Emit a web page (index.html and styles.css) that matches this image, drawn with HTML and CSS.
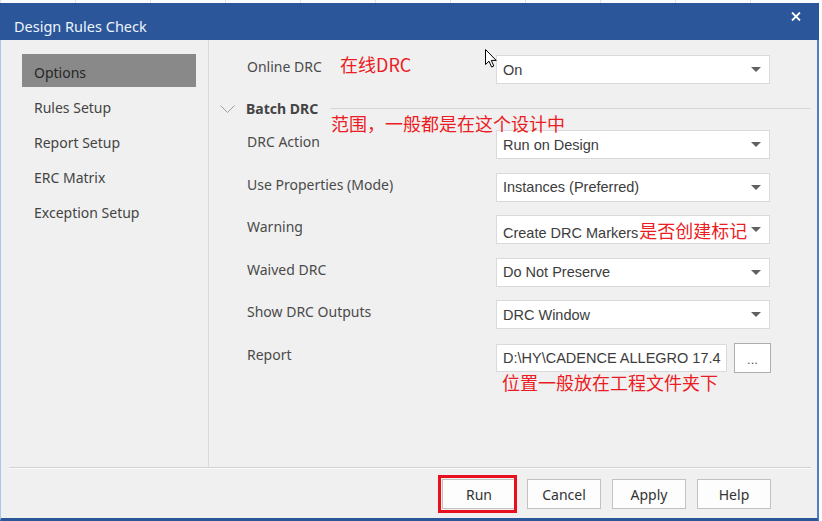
FILE: index.html
```html
<!DOCTYPE html>
<html lang="en">
<head>
<meta charset="utf-8">
<title>Design Rules Check</title>
<link rel="stylesheet" href="styles.css">
</head>
<body>
<div class="dialog">
  <div class="titlebar">
    <span class="title">Design Rules Check</span>
    <svg class="close" width="10" height="9" viewBox="0 0 10 9"><path d="M1 0.5 L9 8.5 M9 0.5 L1 8.5" stroke="#ffffff" stroke-width="1.8" fill="none"/></svg>
  </div>
  <div class="body">
    <div class="main">
      <nav class="nav">
        <div class="nav-item selected">Options</div>
        <div class="nav-item">Rules Setup</div>
        <div class="nav-item">Report Setup</div>
        <div class="nav-item">ERC Matrix</div>
        <div class="nav-item">Exception Setup</div>
      </nav>
      <section class="pane">
        <div class="form">
          <div class="label">Online DRC</div>
          <div class="select"><span class="val">On</span><span class="caret"></span></div>
        </div>
        <div class="group-head">
          <svg class="chev" width="15" height="8" viewBox="0 0 15 8"><path d="M0.5 0.5 L7.5 7.5 L14.5 0.5" stroke="#a0a0a0" stroke-width="1" fill="none"/></svg>
          <span class="group-title">Batch DRC</span>
          <span class="group-line"></span>
        </div>
        <div class="form rows">
          <div class="label">DRC Action</div>
          <div class="select"><span class="val">Run on Design</span><span class="caret"></span></div>
          <div class="label">Use Properties (Mode)</div>
          <div class="select"><span class="val">Instances (Preferred)</span><span class="caret"></span></div>
          <div class="label">Warning</div>
          <div class="select"><span class="val">Create DRC Markers<span class="note-inline">是否创建标记</span></span><span class="caret"></span></div>
          <div class="label">Waived DRC</div>
          <div class="select"><span class="val">Do Not Preserve</span><span class="caret"></span></div>
          <div class="label">Show DRC Outputs</div>
          <div class="select"><span class="val">DRC Window</span><span class="caret"></span></div>
          <div class="label">Report</div>
          <div class="report">
            <div class="textbox"><span class="path">D:\HY\CADENCE ALLEGRO 17.4</span></div>
            <div class="browse">...</div>
          </div>
        </div>
        <span class="note note-online">在线DRC</span>
        <span class="note note-scope">范围，一般都是在这个设计中</span>
        <span class="note note-report">位置一般放在工程文件夹下</span>
        <svg class="cursor" width="13" height="19" viewBox="0 0 13 19"><path d="M0.5 0.5 L0.5 15.5 L4 12.2 L6.6 18 L8.8 17 L6.3 11.4 L11.2 11.4 Z" fill="#ffffff" stroke="#000000" stroke-width="1" stroke-linejoin="round"/></svg>
      </section>
    </div>
    <div class="sep"></div>
    <div class="footer">
      <button class="btn run">Run</button>
      <button class="btn">Cancel</button>
      <button class="btn">Apply</button>
      <button class="btn">Help</button>
    </div>
  </div>
</div>
</body>
</html>
```

FILE: styles.css
```css
html, body {
  margin: 0;
  padding: 0;
}
body {
  width: 822px;
  height: 521px;
  overflow: hidden;
  background-color: #fbfcfd;
  background-image: repeating-linear-gradient(90deg, #dfe3e8 0 1px, transparent 1px 75px);
  font-family: "Noto Sans", "Open Sans", sans-serif;
}
.dialog {
  width: 819px;
  height: 518px;
  margin-top: 3px;
  display: flex;
  flex-direction: column;
}
.titlebar {
  height: 37px;
  flex: none;
  background: #2b579a;
  display: flex;
  align-items: flex-start;
  justify-content: space-between;
}
.title {
  padding: 13px 0 0 14px;
  font-size: 14.5px;
  line-height: 20px;
  color: #eef3fa;
}
.close {
  margin: 9px 18px 0 0;
}
.body {
  flex: 1;
  display: flex;
  flex-direction: column;
  background: #f0f0f0;
  border-left: 1px solid #a8c6ee;
  border-right: 2px solid #4f7fc4;
  border-bottom: 3px solid #2b579a;
}
.main {
  height: 427px;
  display: flex;
}
.nav {
  width: 208px;
  border-right: 1px solid #d9d9d9;
  padding: 14px 0 0 21px;
  box-sizing: border-box;
  display: flex;
  flex-direction: column;
  gap: 2px;
}
.nav-item {
  width: 174px;
  height: 33px;
  box-sizing: border-box;
  padding: 3px 0 0 12px;
  display: flex;
  align-items: center;
  font-size: 14px;
  color: #444;
}
.nav-item.selected {
  background: #898989;
  color: #262626;
}
.pane {
  flex: 1;
  position: relative;
  padding: 15px 6px 0 38px;
}
.form {
  display: grid;
  grid-template-columns: 249px 274px;
  row-gap: 13.6px;
}
.label {
  font-size: 14px;
  line-height: 23px;
  color: #4a4a4a;
  white-space: nowrap;
}
.select {
  height: 29px;
  box-sizing: border-box;
  background: #fff;
  border: 1px solid #dadada;
  display: flex;
  align-items: center;
  justify-content: space-between;
  padding: 0 8px 0 6px;
  font-family: "Liberation Sans", Arial, sans-serif;
  font-size: 14.5px;
  color: #3c3c3c;
  white-space: nowrap;
}
.caret {
  width: 0;
  height: 0;
  border-left: 5px solid transparent;
  border-right: 5px solid transparent;
  border-top: 5px solid #606060;
}
.note-inline {
  color: #ec1c24;
  font-family: "Noto Sans CJK SC", sans-serif;
  font-size: 18px;
  margin-left: 1px;
}
.group-head {
  height: 24px;
  margin: 12px 0 10px -27px;
  display: flex;
  align-items: center;
}
.chev {
  margin-top: 1px;
}
.group-title {
  margin-left: 11px;
  font-size: 14px;
  font-weight: bold;
  color: #444;
}
.group-line {
  flex: 1;
  height: 1px;
  background: #d6d6d6;
  margin-left: 12px;
}
.report {
  display: flex;
  gap: 7px;
  align-items: center;
}
.textbox {
  width: 231px;
  height: 28px;
  flex: none;
  box-sizing: border-box;
  background: #fff;
  border: 1px solid #dadada;
  padding: 0 0 0 6px;
  display: flex;
  align-items: center;
  overflow: hidden;
  white-space: nowrap;
  font-family: "Liberation Sans", Arial, sans-serif;
  font-size: 14.5px;
  color: #3c3c3c;
}
.path {
  flex: none;
}
.browse {
  width: 37px;
  height: 30px;
  flex: none;
  box-sizing: border-box;
  background: #fff;
  border: 1px solid #adadad;
  text-align: center;
  line-height: 32px;
  font-family: "Liberation Sans", Arial, sans-serif;
  font-size: 13px;
  color: #555;
}
.note {
  position: absolute;
  color: #ec1c24;
  font-family: "Noto Sans CJK SC", sans-serif;
  font-size: 18px;
  line-height: 24px;
  white-space: nowrap;
}
.note-online { left: 131px; top: 12px; }
.note-scope { left: 122px; top: 71px; }
.note-report { left: 293px; top: 330px; }
.cursor {
  position: absolute;
  left: 276px;
  top: 9px;
}
.sep {
  height: 1px;
  margin: 0 6px 0 8px;
  background: #d3d3d3;
  border-bottom: 1px solid #fafafa;
}
.footer {
  flex: 1;
  display: flex;
  justify-content: flex-end;
  gap: 11px;
  padding: 10px 46px 0 0;
}
.btn {
  width: 74px;
  height: 30px;
  background: #fdfdfd;
  border: 1px solid #c2c2c2;
  font-family: "Noto Sans", "Open Sans", sans-serif;
  font-size: 14px;
  color: #333;
  padding: 0;
}
.btn.run {
  position: relative;
}
.btn.run::after {
  content: "";
  position: absolute;
  left: -5px;
  top: -5px;
  width: 73px;
  height: 32px;
  border: 3px solid #e8101e;
}
```
